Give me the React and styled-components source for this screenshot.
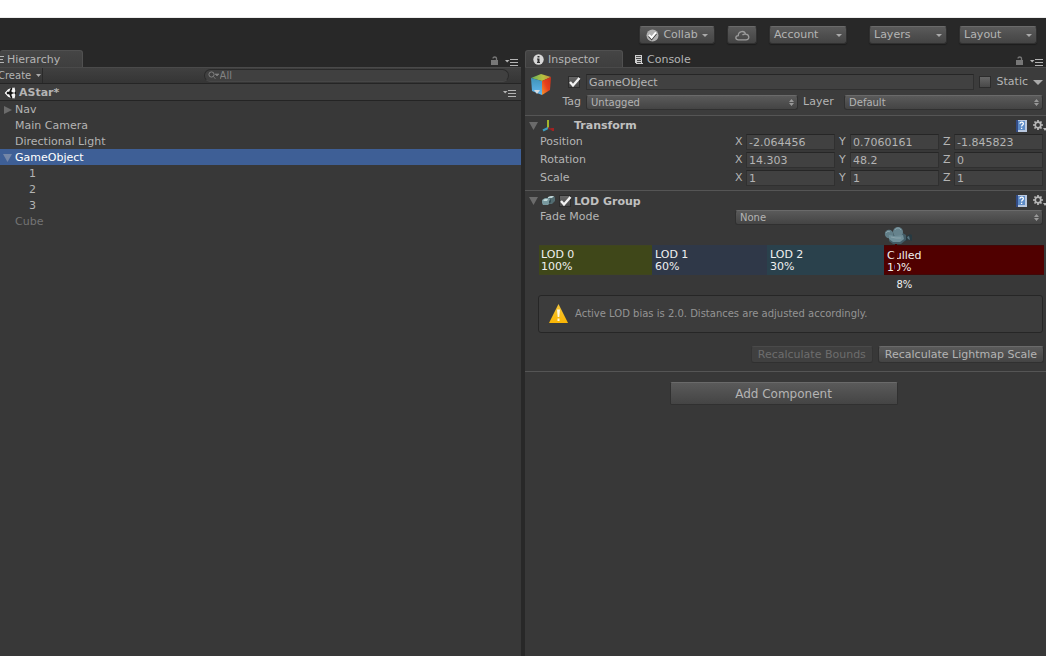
import React from "react";
import styled, { createGlobalStyle, css } from "styled-components";

const Global = createGlobalStyle`
  *, *::before, *::after { box-sizing: border-box; }
  body { margin: 0; background: #383838; }
  body, button, input, select {
    font: 11px/16px "DejaVu Sans", Verdana, sans-serif;
    color: #b4b4b4;
  }
  h2, p, ul { margin: 0; padding: 0; font-size: 11px; }
  ul { list-style: none; }
  svg { display: block; flex: none; }
`;

const raised = css`
  border: 1px solid #303030;
  border-top-color: #6a6a6a;
  border-radius: 3px;
  background: linear-gradient(#5a5a5a, #444444);
`;

const Page = styled.div`
  min-height: 100vh;
  display: flex;
  flex-direction: column;
  background: #282828;
  overflow: hidden;
`;

const TitleStrip = styled.div`
  height: 18px;
  background: #ffffff;
  border-bottom: 1px solid #ededed;
`;

const MainToolbar = styled.header`
  height: 32px;
  display: flex;
  align-items: center;
  justify-content: flex-end;
  gap: 12px;
  padding: 2px 9px 0 0;
`;

const MenuGroup = styled.div`
  display: flex;
  gap: 12px;
  margin-left: 10px;
`;

const MenuButton = styled.button`
  ${raised}
  height: 18px;
  width: ${(p) => p.$width}px;
  padding: 0 ${(p) => (p.$tight ? 6 : 4)}px;
  display: flex;
  align-items: center;
  justify-content: ${(p) => (p.$centered ? "center" : "space-between")};
  line-height: 14px;
  box-shadow: 0 1px 1px #1c1c1c;
`;

const Columns = styled.main`
  flex: 1;
  display: grid;
  grid-template-columns: minmax(0, 1fr) minmax(0, 1fr);
  gap: 4px;
`;

const Panel = styled.section`
  display: flex;
  flex-direction: column;
  min-width: 0;
`;

const TabBar = styled.div`
  height: 17px;
  display: flex;
  justify-content: space-between;
`;

const Tabs = styled.div`
  display: flex;
`;

const Tab = styled.button`
  display: flex;
  align-items: center;
  gap: ${(p) => p.$gap || 4}px;
  height: 18px;
  width: ${(p) => p.$width}px;
  padding: 0 0 0 ${(p) => p.$pad}px;
  border: 1px solid transparent;
  border-bottom: 0;
  background: none;
  white-space: nowrap;
  ${(p) =>
    p.$active &&
    css`
      background: linear-gradient(#454545, #3e3e3e);
      border-color: #505050 #505050 transparent;
      border-left-width: ${p.$pad ? 1 : 0}px;
      border-radius: 3px 3px 0 0;
    `}
`;

const PanelTools = styled.div`
  display: flex;
  align-items: flex-end;
  gap: 6px;
  padding: 0 3px 1px 0;
`;

const PanelBody = styled.div`
  flex: 1;
  background: #383838;
`;

const CreateBar = styled.div`
  height: 17px;
  display: flex;
  align-items: center;
  justify-content: space-between;
  padding-right: 12px;
  background: linear-gradient(#404040, #353535);
  border-top: 1px solid #4a4a4a;
  border-bottom: 1px solid #252525;
`;

const CreateButton = styled.button`
  display: flex;
  align-items: center;
  gap: 5px;
  width: 45px;
  margin-left: -2px;
  padding: 0;
  border: 0;
  border-right: 1px solid #2a2a2a;
  background: none;
  font-size: 10px;
  line-height: 15px;
`;

const SearchBox = styled.label`
  width: 60%;
  height: 13px;
  display: flex;
  align-items: center;
  padding-left: 3px;
  border: 1px solid #2a2a2a;
  border-bottom-color: #474747;
  border-radius: 7px;
  background: #404040;
`;

const SearchInput = styled.input`
  flex: 1;
  min-width: 0;
  padding: 0;
  border: 0;
  background: none;
  font-size: 10px;
  line-height: 11px;
  height: 11px;
  &::placeholder { color: #838383; opacity: 1; }
`;

const SceneRow = styled.div`
  height: 17px;
  display: flex;
  align-items: center;
  gap: 3px;
  padding: 1px 5px 0 4px;
  border-bottom: 1px solid #242424;
  background: #3e3e3e;
  font-weight: bold;
  svg:last-child { margin-left: auto; }
`;

const TreeRow = styled.li`
  height: 16px;
  display: flex;
  align-items: center;
  gap: 3px;
  padding: 2px 0 0 ${(p) => (p.$depth ? 17 : 3)}px;
  background: ${(p) => (p.$selected ? "#3e5f96" : "transparent")};
  color: ${(p) => (p.$selected ? "#ffffff" : p.$muted ? "#747474" : "#b4b4b4")};
`;

const Twist = styled.span`
  width: 9px;
  display: flex;
`;

const ObjectHeader = styled.div`
  display: flex;
  gap: 5px;
  height: 49px;
  padding: 6px 3px 0 5px;
  border-top: 1px solid #4a4a4a;
  border-bottom: 1px solid #555555;
  background: #3c3c3c;
`;

const HeaderRows = styled.div`
  flex: 1;
  min-width: 0;
  display: flex;
  flex-direction: column;
  gap: 4px;
`;

const HeaderLine = styled.div`
  height: 16px;
  display: flex;
  align-items: center;
  gap: 5px;
`;

const ActiveToggle = styled.span`
  flex: none;
  display: flex;
  justify-content: flex-end;
  width: 24px;
`;

const FieldLabel = styled.label`
  flex: none;
  width: ${(p) => (p.$width ? p.$width + "px" : "auto")};
  text-align: ${(p) => (p.$right ? "right" : "left")};
`;

const TextField = styled.input`
  flex: 1;
  width: 100%;
  min-width: 0;
  height: 16px;
  padding: 0 2px;
  border: 1px solid #303030;
  border-top-color: #262626;
  background: #414141;
  line-height: 14px;
`;

const CheckWrap = styled.span`
  flex: none;
  display: grid;
  width: 13px;
  > * { grid-area: 1 / 1; }
  svg { pointer-events: none; overflow: visible; }
`;

const CheckInput = styled.input`
  appearance: none;
  width: 12px;
  height: 12px;
  margin: 0;
  border: 1px solid #2c2c2c;
  background: linear-gradient(#666666, #484848);
`;

const SelectWrap = styled.span`
  flex: ${(p) => p.$grow || 1} 1 0;
  min-width: 0;
  display: grid;
  align-items: center;
  > * { grid-area: 1 / 1; }
  svg { justify-self: end; margin-right: 4px; pointer-events: none; }
`;

const SelectBox = styled.select`
  ${raised}
  appearance: none;
  width: 100%;
  height: 15px;
  padding: 0 4px;
  font-size: 10px;
  line-height: 13px;
`;

const Component = styled.section`
  padding-bottom: ${(p) => p.$bottom}px;
  border-bottom: 1px solid #555555;
`;

const ComponentTitle = styled.div`
  height: ${(p) => (p.$tall ? 18 : 17)}px;
  display: flex;
  align-items: center;
  padding: 2px 0 0 4px;
`;

const ComponentName = styled.h2`
  flex: 1;
  padding: 1px 0 0 4px;
  font-weight: bold;
  color: #c0c0c0;
  line-height: 16px;
`;

const TitleIcons = styled.span`
  width: 41px;
  display: flex;
  align-items: center;
  gap: 4px;
`;

const TitleTools = styled.span`
  display: flex;
  align-items: center;
  gap: 5px;
`;

const PropertyRow = styled.div`
  height: ${(p) => (p.$tall ? 18 : 16)}px;
  display: grid;
  grid-template-columns: minmax(0, 195fr) minmax(0, 308fr);
  align-items: center;
  padding: 0 3px 0 15px;
`;

const Vector = styled.div`
  display: grid;
  grid-template-columns: repeat(3, minmax(0, 1fr));
  gap: 4px;
`;

const Axis = styled.label`
  display: grid;
  grid-template-columns: 11px minmax(0, 1fr);
`;

const LodArea = styled.div`
  position: relative;
  padding: 20px 2px 0 14px;
`;

const LodBar = styled.div`
  display: grid;
  grid-template-columns: 113fr 115fr 117fr 160fr;
  height: 30px;
`;

const LodSegment = styled.div`
  padding: ${(p) => (p.$offset ? 4 : 3)}px 3px 0 ${(p) => (p.$first ? 2 : 3)}px;
  border: 1px solid ${(p) => p.$border || p.$color};
  border-width: 1px 0;
  background: ${(p) => p.$color};
  color: #f0f0f0;
  font-size: 11px;
  line-height: 12px;
`;

const LodMarker = styled.div`
  position: absolute;
  top: 2px;
  left: 69%;
  display: flex;
  flex-direction: column;
  align-items: flex-start;
`;

const MarkerLine = styled.span`
  width: 2px;
  height: 30px;
  margin-left: 11px;
  background: #500000;
`;

const MarkerValue = styled.span`
  padding: 5px 0 0 12px;
  color: #f0f0f0;
  font-size: 10px;
  line-height: 12px;
`;

const HelpBox = styled.div`
  display: flex;
  align-items: center;
  gap: 7px;
  height: 38px;
  margin: 20px 3px 0 13px;
  padding-left: 10px;
  border: 1px solid #262626;
  border-radius: 3px;
  background: #3c3c3c;
  color: #949494;
  p { font-size: 10px; }
`;

const ButtonRow = styled.div`
  display: flex;
  justify-content: flex-end;
  gap: 5px;
  padding: 13px 2px 0 0;
`;

const ActionButton = styled.button`
  ${raised}
  height: 17px;
  padding: 0 6px;
  line-height: 14px;
  white-space: nowrap;
  &:disabled { opacity: 1; color: #6d6d6d; background: #404040; border-color: #4a4a4a #343434 #303030; }
`;

const AddRow = styled.div`
  display: flex;
  justify-content: center;
  padding: 10px 4px 0 0;
`;

const AddButton = styled.button`
  ${raised}
  width: 228px;
  height: 23px;
  padding: 0;
  border-radius: 2px;
  font-size: 12px;
  line-height: 18px;
`;

const Down = ({ size = 7, color = "#aaaaaa" }) => (
  <svg width={size} height={Math.ceil(size / 2)} viewBox="0 0 8 4" preserveAspectRatio="none">
    <path d="M0 0h8L4 4z" fill={color} />
  </svg>
);

const Fold = ({ open, color = "#6b6b6b" }) =>
  open ? (
    <svg width="9" height="8" viewBox="0 0 9 8"><path d="M0 0h9L4.500 8z" fill={color} /></svg>
  ) : (
    <svg width="9" height="8" viewBox="0 0 9 8"><path d="M1 0v8l8-4z" fill={color} /></svg>
  );

const UpDown = () => (
  <svg width="5" height="7" viewBox="0 0 5 7">
    <path d="M0 3h5L2.500 0zM0 4h5L2.500 7z" fill="#999999" />
  </svg>
);

const MenuLines = () => (
  <svg width="13" height="8" viewBox="0 0 13 8">
    <path d="M0 2h4.500L2.200 4.500z" fill="#b4b4b4" />
    <path d="M5 1.500h8M5 4.500h8M5 7.500h8" stroke="#b4b4b4" />
  </svg>
);

const Lock = () => (
  <svg width="8" height="10" viewBox="0 0 8 10">
    <path d="M2 2.500c0-2 3.500-2 3.500 0V5" fill="none" stroke="#777777" strokeWidth="1.300" />
    <rect x="0" y="4" width="7" height="5" fill="#777777" />
  </svg>
);

const ListIcon = () => (
  <svg width="4" height="9" viewBox="0 0 4 9">
    <path d="M0 1.500h4M0 4.500h3M0 7.500h4" stroke="#b4b4b4" />
  </svg>
);

const InfoIcon = () => (
  <svg width="11" height="11" viewBox="0 0 11 11">
    <circle cx="5.500" cy="5.500" r="5.200" fill="#d8d8d8" />
    <path d="M4.500 2h2v1.500h-2zM4 4.500h2.500V8H7v1H4V8h.5V5.500H4z" fill="#303030" />
  </svg>
);

const ConsoleIcon = () => (
  <svg width="9" height="9" viewBox="0 0 9 9">
    <path d="M1 0h7v8h1v1H2V8H1z" fill="#cfcfcf" />
    <path d="M2 1.500h5M2 3.500h5M3 5.500h4M3 7.500h4" stroke="#4a4a4a" />
  </svg>
);

const CollabIcon = () => (
  <svg width="13" height="13" viewBox="0 0 13 13">
    <circle cx="6.500" cy="6.500" r="6" fill="#b0b0b0" />
    <path d="M3 7l2.600 2.900L10 4.500" fill="none" stroke="#3a3a3a" strokeWidth="2.200" />
    <path d="M3 5.800l2.600 2.900L10 3.300" fill="none" stroke="#ffffff" strokeWidth="2" />
  </svg>
);

const CloudIcon = () => (
  <svg width="15" height="11" viewBox="0 0 15 11">
    <path d="M3.500 9.800C0 9.800 0 5.800 3.300 5.600 3.300 1 9.500 0 10.500 4.200c4.500.4 4.200 5.600.5 5.600zM7.500 5.200c.7-1 1.700-1.200 3-1" fill="none" stroke="#9c9c9c" strokeWidth="1.300" />
  </svg>
);

const SearchIcon = () => (
  <svg width="12" height="9" viewBox="0 0 12 9">
    <circle cx="3.500" cy="3.500" r="2.600" fill="none" stroke="#838383" />
    <path d="M5.500 5.500L7.500 8M7 3h4L9 5z" stroke="#838383" strokeWidth=".7" fill="#838383" />
  </svg>
);

const UnityIcon = () => (
  <svg width="12" height="12" viewBox="0 0 12 12">
    <path d="M0 6l4-4 6-2 2 5v2l-2 5-6-2z" fill="#151515" />
    <path d="M.5 6L4 2.300l2.800-1.200L5.200 4.800H3.200L2.600 6l.6 1.200h2l1.600 3.700L4 9.700z" fill="#f4f4f4" />
    <path d="M8 .8l2.600-.3.800 3.800-.7 1.500L8.800 5.500 7.200 4.200 8.300 2zM8 11.200l2.600.3.800-3.800-.7-1.500-1.900.3-1.600 1.300 1.100 2.200z" fill="#f4f4f4" />
  </svg>
);

const CubeIcon = () => (
  <svg width="22" height="22" viewBox="0 0 22 22">
    <defs>
      <linearGradient id="cubeTop" x1="0" x2="1"><stop stopColor="#5fae5b" /><stop offset=".6" stopColor="#b9c23f" /><stop offset="1" stopColor="#c98a3a" /></linearGradient>
      <linearGradient id="cubeLeft" x1="0" y1="0" x2="0" y2="1"><stop stopColor="#3f93b8" /><stop offset="1" stopColor="#62b8f2" /></linearGradient>
      <linearGradient id="cubeRight" x1="0" y1="1" x2="1" y2="0"><stop stopColor="#f2982e" /><stop offset=".5" stopColor="#e8401c" /><stop offset="1" stopColor="#c9301a" /></linearGradient>
    </defs>
    <path d="M1 4L11 0l10 3-9 4z" fill="url(#cubeTop)" />
    <path d="M1 4l11 3v14L2 17z" fill="url(#cubeLeft)" />
    <path d="M12 7l9-4-1 13-8 5z" fill="url(#cubeRight)" />
    <path d="M4 16h6l-3 4z" fill="#d5dbe0" />
  </svg>
);

const AxesIcon = () => (
  <svg width="14" height="14" viewBox="0 0 14 14">
    <path d="M6 9V1" stroke="#a3b52c" strokeWidth="2" />
    <path d="M6 9l-5 2.500" stroke="#3d9fc2" strokeWidth="2" />
    <path d="M6 9l5 2" stroke="#8c2626" strokeWidth="1.500" />
    <path d="M9 9h3v3h-2z" fill="#a32222" />
  </svg>
);

const LodIcon = () => (
  <svg width="13" height="10" viewBox="0 0 13 10">
    <path d="M5 2l3-2h4l1 2v3l-3 3H6z" fill="#526b70" />
    <path d="M6 1l3-1h3l-2 2H6z" fill="#bfd4d6" />
    <path d="M0 4l3-2h4l1 2v3L6 9H1L0 7z" fill="#78989e" />
    <path d="M1 4l2-1h3l-1 2H2z" fill="#c4dada" />
    <path d="M7 5l2-2v3L7 8z" fill="#344c52" />
  </svg>
);

const HelpIcon = () => (
  <svg width="12" height="12" viewBox="0 0 12 12">
    <path d="M0 0h11v12H0z" fill="#b9c8df" />
    <path d="M0 0h2v12H0z" fill="#334c86" />
    <path d="M2 1h7v9H2z" fill="#5d8cc8" />
    <path d="M4 3.800c0-2.400 3.800-2 3.300.2C7 5 5.600 5 5.600 6.500M5.600 7.700V9" fill="none" stroke="#ffffff" strokeWidth="1.300" />
  </svg>
);

const GearIcon = () => (
  <svg width="13" height="12" viewBox="0 0 13 12">
    <circle cx="5" cy="5" r="2.800" fill="none" stroke="#b8b8b8" strokeWidth="1.700" />
    <path d="M5 0v2M5 8v2M0 5h2M8 5h2M1.500 1.500l1.300 1.300M7.200 7.200l1.300 1.300M8.500 1.500L7.200 2.800M2.800 7.200L1.500 8.500" stroke="#b8b8b8" strokeWidth="1.700" />
    <path d="M10 8h4l-2 3z" fill="#b8b8b8" />
  </svg>
);

const CameraIcon = () => (
  <svg width="28" height="17" viewBox="0 0 28 17">
    <path d="M20 11l6-4 2 1v6l-3-1-4 1z" fill="#273940" />
    <path d="M23 10l2-1 1 4-2-1z" fill="#587580" />
    <path d="M5 8l12-3 5 3v5l-5 4H9l-4-3z" fill="#435c66" />
    <circle cx="5" cy="7" r="4.200" fill="#617e88" />
    <circle cx="14" cy="5" r="5" fill="#66838d" />
    <path d="M5 8l7 1 7-1 1 4-4 3H9l-4-3z" fill="#708f99" />
    <path d="M2 6c1-2 3-2 4-1M11 3c1-2 4-3 6 0M7 10l5 1h5" fill="none" stroke="#8ba4ac" strokeWidth="1" />
  </svg>
);

const WarningIcon = () => (
  <svg width="19" height="20" viewBox="0 0 19 20">
    <defs><linearGradient id="warn" x1="0" y1="0" x2="0" y2="1"><stop stopColor="#f2c53a" /><stop offset="1" stopColor="#fbb604" /></linearGradient></defs>
    <path d="M9.500 0L19 19H0z" fill="url(#warn)" />
    <path d="M8 5.500h3l-.7 7.500H8.700zM8.500 14.500h2V17h-2z" fill="#fff8de" />
  </svg>
);

function Check({ checked, label, id }) {
  return (
    <CheckWrap>
      <CheckInput type="checkbox" id={id} aria-label={label} defaultChecked={checked} />
      {checked && (
        <svg width="13" height="12" viewBox="0 0 13 12">
          <path d="M2 6L5 9.500 11.500 2" fill="none" stroke="#f2f2f2" strokeWidth="2.400" />
        </svg>
      )}
    </CheckWrap>
  );
}

function Dropdown({ id, value, grow }) {
  return (
    <SelectWrap $grow={grow}>
      <SelectBox id={id} defaultValue={value}><option>{value}</option></SelectBox>
      <UpDown />
    </SelectWrap>
  );
}

const tree = [
  { name: "Nav", fold: "closed" },
  { name: "Main Camera" },
  { name: "Directional Light" },
  { name: "GameObject", fold: "open", selected: true },
  { name: "1", depth: 1 },
  { name: "2", depth: 1 },
  { name: "3", depth: 1 },
  { name: "Cube", muted: true },
];

const transform = [
  ["Position", ["-2.064456", "0.7060161", "-1.845823"]],
  ["Rotation", ["14.303", "48.2", "0"]],
  ["Scale", ["1", "1", "1"]],
];

const lods = [
  { name: "LOD 0", value: "100%", color: "#3f4719", border: "#3f451f" },
  { name: "LOD 1", value: "60%", color: "#2f3848" },
  { name: "LOD 2", value: "30%", color: "#2a414c" },
  { name: "Culled", value: "10%", color: "#500000", border: "#400808" },
];

const Tools = () => (
  <TitleTools><HelpIcon /><GearIcon /></TitleTools>
);

function Hierarchy() {
  return (
    <Panel>
      <TabBar>
        <Tabs><Tab $active $width={83} $pad={0} $gap={3}><ListIcon />Hierarchy</Tab></Tabs>
        <PanelTools><Lock /><MenuLines /></PanelTools>
      </TabBar>
      <PanelBody>
        <CreateBar>
          <CreateButton>Create <Down size={5} /></CreateButton>
          <SearchBox>
            <SearchIcon />
            <SearchInput placeholder="All" aria-label="Search hierarchy" />
          </SearchBox>
        </CreateBar>
        <SceneRow><UnityIcon />AStar*<MenuLines /></SceneRow>
        <ul>
          {tree.map((t) => (
            <TreeRow key={t.name} $selected={t.selected} $muted={t.muted} $depth={t.depth}>
              <Twist>{t.fold && <Fold open={t.fold === "open"} color={t.selected ? "#7487a8" : undefined} />}</Twist>
              {t.name}
            </TreeRow>
          ))}
        </ul>
      </PanelBody>
    </Panel>
  );
}

function Inspector() {
  return (
    <Panel>
      <TabBar>
        <Tabs>
          <Tab $active $width={98} $pad={7}><InfoIcon />Inspector</Tab>
          <Tab $width={90} $pad={10}><ConsoleIcon />Console</Tab>
        </Tabs>
        <PanelTools><Lock /><MenuLines /></PanelTools>
      </TabBar>
      <PanelBody>
        <ObjectHeader>
          <CubeIcon />
          <HeaderRows>
            <HeaderLine>
              <ActiveToggle><Check checked label="Active" /></ActiveToggle>
              <TextField defaultValue="GameObject" aria-label="Name" />
              <Check id="static" />
              <FieldLabel htmlFor="static">Static</FieldLabel>
              <Down size={10} />
            </HeaderLine>
            <HeaderLine>
              <FieldLabel $width={24} $right htmlFor="tag">Tag</FieldLabel>
              <Dropdown id="tag" value="Untagged" grow={211} />
              <FieldLabel $width={36} htmlFor="layer">Layer</FieldLabel>
              <Dropdown id="layer" value="Default" grow={198} />
            </HeaderLine>
          </HeaderRows>
        </ObjectHeader>

        <Component $bottom={3}>
          <ComponentTitle>
            <TitleIcons><Fold open /><AxesIcon /></TitleIcons>
            <ComponentName>Transform</ComponentName>
            <Tools />
          </ComponentTitle>
          {transform.map(([label, values]) => (
            <PropertyRow key={label} $tall>
              <span>{label}</span>
              <Vector>
                {values.map((v, i) => (
                  <Axis key={i}>{"XYZ"[i]}<TextField defaultValue={v} /></Axis>
                ))}
              </Vector>
            </PropertyRow>
          ))}
        </Component>

        <Component $bottom={8}>
          <ComponentTitle $tall>
            <TitleIcons><Fold open /><LodIcon /><Check checked label="LOD Group enabled" /></TitleIcons>
            <ComponentName>LOD Group</ComponentName>
            <Tools />
          </ComponentTitle>
          <PropertyRow>
            <label htmlFor="fade">Fade Mode</label>
            <Dropdown id="fade" value="None" />
          </PropertyRow>
          <LodArea>
            <LodBar>
              {lods.map((l, i) => (
                <LodSegment key={l.name} $color={l.color} $border={l.border} $first={i === 0} $offset={i === 3}>
                  {l.name}<br />{l.value}
                </LodSegment>
              ))}
            </LodBar>
            <LodMarker>
              <CameraIcon />
              <MarkerLine />
              <MarkerValue>8%</MarkerValue>
            </LodMarker>
          </LodArea>
          <HelpBox><WarningIcon /><p>Active LOD bias is 2.0. Distances are adjusted accordingly.</p></HelpBox>
          <ButtonRow>
            <ActionButton disabled>Recalculate Bounds</ActionButton>
            <ActionButton>Recalculate Lightmap Scale</ActionButton>
          </ButtonRow>
        </Component>
        <AddRow><AddButton>Add Component</AddButton></AddRow>
      </PanelBody>
    </Panel>
  );
}

export default function App() {
  return (
    <Page>
      <Global />
      <TitleStrip />
      <MainToolbar>
        <MenuButton $width={76} $tight><CollabIcon />Collab<Down size={6} /></MenuButton>
        <MenuButton $width={30} $centered aria-label="Cloud services"><CloudIcon /></MenuButton>
        <MenuButton $width={78}>Account<Down size={6} /></MenuButton>
        <MenuGroup>
          <MenuButton $width={78}>Layers<Down size={6} /></MenuButton>
          <MenuButton $width={78}>Layout<Down size={6} /></MenuButton>
        </MenuGroup>
      </MainToolbar>
      <Columns>
        <Hierarchy />
        <Inspector />
      </Columns>
    </Page>
  );
}
